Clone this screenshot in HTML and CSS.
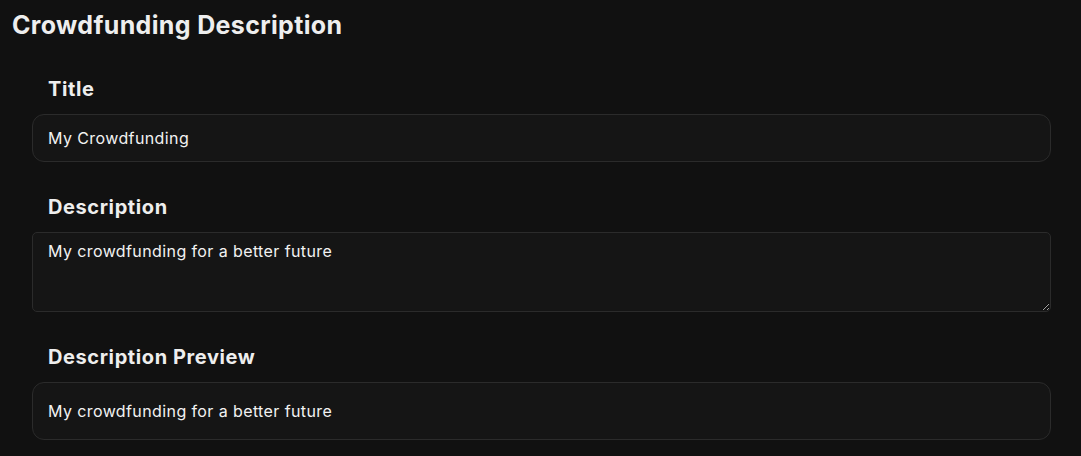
FILE: index.html
```html
<!DOCTYPE html>
<html lang="en">
  <head>
    <meta charset="UTF-8" />
    <meta name="viewport" content="width=device-width, initial-scale=1.0" />
    <title>Crowdfunding Description</title>
    <link rel="stylesheet" href="styles.css">
  </head>
  <body>
    <main>
      <h1>Crowdfunding Description</h1>
      <form id="crowdfunding-description">
        <div class="field">
          <label for="title">Title</label>
          <input
            type="text"
            name="title"
            id="title"
            class="box"
            value="My Crowdfunding"
          />
        </div>
        <div class="field">
          <label for="description">Description</label>
          <textarea name="description" id="description" class="box" rows="3">My crowdfunding for a better future</textarea>
        </div>
        <div class="field">
          <label>Description Preview</label>
          <div class="box preview" id="preview">My crowdfunding for a better future</div>
        </div>
      </form>
    </main>
    <script>
      const description = document.querySelector("#description");
      description.addEventListener("input", () => {
        document.querySelector("#preview").textContent = description.value;
      });
    </script>
  </body>
</html>
```
FILE: styles.css
```css
* {
  box-sizing: border-box;
}
html {
  color-scheme: dark;
}
body {
  margin: 0;
  background-color: #111111;
  color: #eeeeee;
  font-family: Inter, "Noto Sans", sans-serif;
}
main {
  padding: 9px 30px 0 12px;
}
h1 {
  margin: 0;
  font-size: 25px;
  line-height: 32px;
  font-weight: 700;
  letter-spacing: 0.35px;
}
form {
  display: flex;
  flex-direction: column;
  gap: 31px;
  padding-left: 20px;
  margin-top: 34px;
}
label {
  display: block;
  margin: 0 0 11px 16px;
  font-size: 20px;
  line-height: 28px;
  font-weight: 700;
  letter-spacing: 0.6px;
}
.box {
  display: block;
  width: 100%;
  margin: 0;
  border: 1px solid #2b2b2b;
  border-radius: 12px;
  background-color: #151515;
  color: #f2f2f2;
  font-family: Inter, "Noto Sans", sans-serif;
  font-size: 16px;
  line-height: 24px;
  letter-spacing: 0.4px;
  outline: none;
}
input.box {
  height: 48px;
  padding: 0 15px;
}
textarea.box {
  height: 80px;
  padding: 6px 15px;
  border-radius: 5px;
  resize: vertical;
}
.preview {
  padding: 16px 15px;
}
```
